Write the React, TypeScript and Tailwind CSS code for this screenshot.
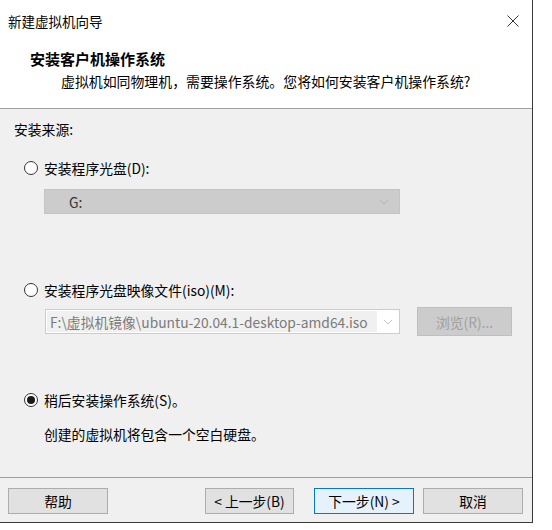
import React from 'react';

const FONT = "font-['Noto_Sans_CJK_SC','Noto_Sans',sans-serif]";

function Radio({ checked, label }: { checked?: boolean; label: string }) {
  return (
    <div className="flex h-5 items-center pl-[24px]">
      <span className="flex h-[14px] w-[14px] items-center justify-center rounded-full border border-[#333333] bg-white">
        {checked && <span className="h-[8px] w-[8px] rounded-full bg-[#1a1a1a]" />}
      </span>
      <span className="ml-[6px] text-[13.8px] leading-5 text-black">{label}</span>
    </div>
  );
}

function Chevron({ color }: { color: string }) {
  return (
    <svg width="10" height="6" viewBox="0 0 10 6" fill="none">
      <path d="M1 1l4 4 4-4" stroke={color} strokeWidth="1" />
    </svg>
  );
}

function WizButton({ label, width, primary }: { label: string; width: string; primary?: boolean }) {
  return (
    <button
      className={`flex h-[26px] items-center justify-center border text-[13.8px] leading-5 text-black ${width} ${
        primary ? 'border-[#0078d7] bg-[#e5f1fb]' : 'border-[#adadad] bg-[#e1e1e1]'
      }`}
    >
      {label}
    </button>
  );
}

export default function App() {
  return (
    <div className={`h-[530px] w-[552px] bg-white ${FONT}`}>
      <div className="flex h-[523px] w-[533px] flex-col border-b border-r border-[#3a3a3a] bg-[#f0f0f0]">
        {/* ── title + header ───────────────────────── */}
        <div className="h-[108px] bg-white">
          <div className="flex h-[42px] items-center justify-between pl-[8px] pr-[13px]">
            <span className="text-[13.5px] leading-5 text-black">新建虚拟机向导</span>
            <svg width="12" height="12" viewBox="0 0 12 12" fill="none">
              <path d="M0.5 0.5l11 11M11.5 0.5l-11 11" stroke="#333333" strokeWidth="1" />
            </svg>
          </div>
          <div className="mt-[7px] pl-[30px] text-[15px] font-bold leading-5 text-black">
            安装客户机操作系统
          </div>
          <div className="mt-[2px] pl-[61px] text-[13.9px] leading-5 text-black">
            虚拟机如同物理机，需要操作系统。您将如何安装客户机操作系统?
          </div>
        </div>
        <div className="h-px bg-[#a0a0a0]" />

        {/* ── install source ───────────────────────── */}
        <div className="flex-1 pt-[10px]">
          <div className="pl-[14px] text-[13.8px] leading-5 text-black">安装来源:</div>

          <div className="mt-[19px]">
            <Radio label="安装程序光盘(D):" />
          </div>
          <div className="ml-[44px] mt-[11px] flex h-[25px] w-[356px] items-center justify-between border border-[#c4c4c4] bg-[#cccccc] pl-[24px] pr-[10px]">
            <span className="text-[13.8px] leading-5 text-[#333333]">G:</span>
            <Chevron color="#b4b4b4" />
          </div>

          <div className="mt-[66px]">
            <Radio label="安装程序光盘映像文件(iso)(M):" />
          </div>
          <div className="ml-[45px] mt-[7px] flex items-center">
            <div className="flex h-[25px] w-[355px] items-center border border-[#cccccc] bg-white p-px">
              <div className="flex h-full flex-1 items-center bg-[#f0f0f0] pl-[3px] text-[13.8px] leading-5 text-[#7a7a7a]">
                F:\虚拟机镜像\ubuntu-20.04.1-desktop-amd64.iso
              </div>
              <div className="flex w-[21px] items-center justify-center">
                <Chevron color="#c4c4c4" />
              </div>
            </div>
            <div className="ml-[17px] flex h-[29px] w-[95px] items-center justify-center border border-[#bfbfbf] bg-[#cccccc] text-[13.8px] leading-5 text-[#a0a0a0]">
              浏览(R)...
            </div>
          </div>

          <div className="mt-[54px]">
            <Radio checked label="稍后安装操作系统(S)。" />
          </div>
          <div className="mt-[14px] pl-[44px] text-[13.8px] leading-5 text-black">
            创建的虚拟机将包含一个空白硬盘。
          </div>
        </div>

        {/* ── wizard buttons ───────────────────────── */}
        <div className="h-px bg-[#a0a0a0]" />
        <div className="flex h-[44px] items-start pl-[8px] pt-[10px]">
          <WizButton label="帮助" width="w-[100px]" />
          <div className="ml-[97px]">
            <WizButton label="< 上一步(B)" width="w-[89px]" />
          </div>
          <div className="ml-[20px]">
            <WizButton label="下一步(N) >" width="w-[100px]" primary />
          </div>
          <div className="ml-[9px]">
            <WizButton label="取消" width="w-[100px]" />
          </div>
        </div>
      </div>
    </div>
  );
}
